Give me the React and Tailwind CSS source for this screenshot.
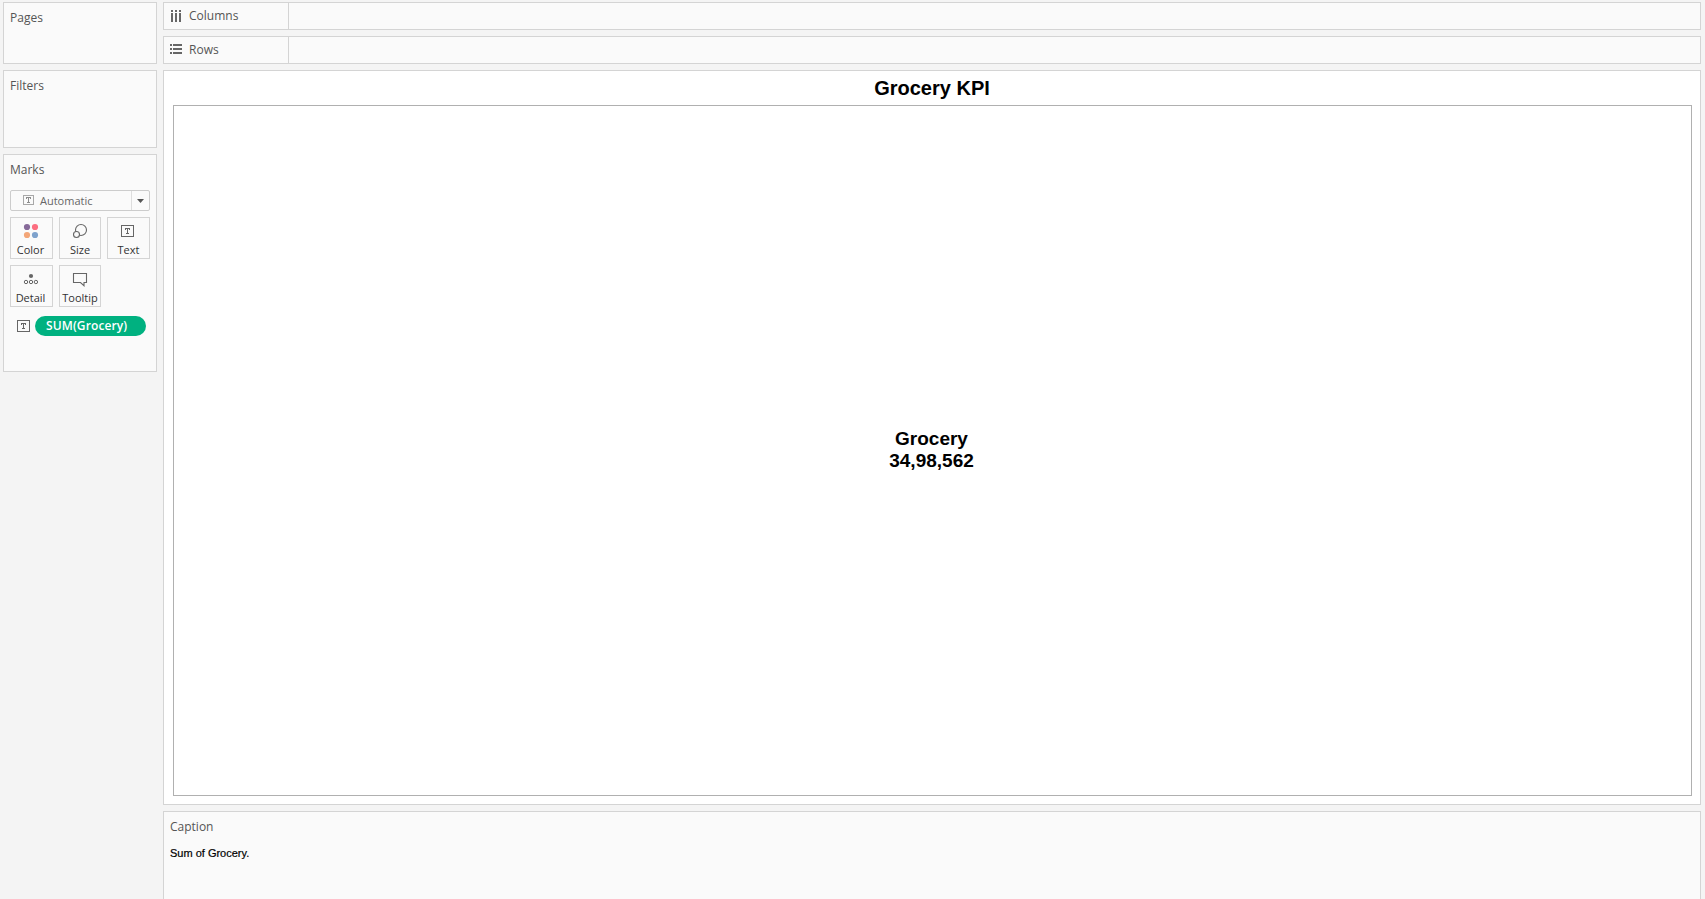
const card = 'border border-[#d4d4d4] bg-[#fafafa]';
const ui = "font-['Open_Sans',sans-serif]";

function TextGlyph({ className = '' }) {
  return (
    <svg className={className} width="13" height="12" viewBox="0 0 13 12" fill="none" shapeRendering="crispEdges">
      <rect x="0.5" y="0.5" width="12" height="11" stroke="#666666" />
      <path d="M4 3h5v2h-1v-1h-1v4h1v1h-3v-1h1v-4h-1v1h-1z" fill="#666666" />
    </svg>
  );
}

function SmallTextGlyph({ className = '' }) {
  return (
    <svg className={className} width="11" height="10" viewBox="0 0 11 10" fill="none">
      <rect x="0.5" y="0.5" width="10" height="9" stroke="#a8a8a8" />
      <path d="M3 2h5v2H7V3H6v4h1v1H4V7h1V3H4v1H3z" fill="#8c8c8c" />
    </svg>
  );
}

function ColumnsIcon() {
  return (
    <svg width="12" height="12" viewBox="0 0 12 12" fill="#666666" shapeRendering="crispEdges">
      <path d="M1 0h2v2H1zM5 0h2v2H5zM9 0h2v2H9zM1 3h2v9H1zM5 3h2v9H5zM9 3h2v9H9z" />
    </svg>
  );
}

function RowsIcon() {
  return (
    <svg width="12" height="12" viewBox="0 0 12 12" fill="#666666" shapeRendering="crispEdges">
      <path d="M0 0h2v2H0zM3 0h9v2H3zM0 4h2v2H0zM3 4h9v2H3zM0 8h2v2H0zM3 8h9v2H3z" />
    </svg>
  );
}

function ColorIcon() {
  return (
    <svg width="16" height="16" viewBox="0 0 16 16">
      <circle cx="4" cy="4" r="3.1" fill="#866a99" />
      <circle cx="12" cy="4" r="3.1" fill="#fc6e80" />
      <circle cx="4" cy="12" r="3.1" fill="#f3a678" />
      <circle cx="12" cy="12" r="3.1" fill="#7ea2cc" />
    </svg>
  );
}

function SizeIcon() {
  return (
    <svg width="16" height="16" viewBox="0 0 16 16" fill="#fafafa" stroke="#666666" strokeWidth="1.1">
      <circle cx="9" cy="7" r="5.5" />
      <circle cx="4.5" cy="11.5" r="3" />
    </svg>
  );
}

function DetailIcon() {
  return (
    <svg width="16" height="16" viewBox="0 0 16 16" fill="none" stroke="#666666">
      <circle cx="8" cy="5" r="2.1" fill="#666666" stroke="none" />
      <circle cx="3" cy="11" r="1.7" />
      <circle cx="8" cy="11" r="1.7" />
      <circle cx="12.900" cy="11" r="1.7" />
    </svg>
  );
}

function TooltipIcon() {
  return (
    <svg width="16" height="16" viewBox="0 0 16 16" fill="none" stroke="#666666" strokeWidth="1.1">
      <path d="M1.500 2.500h13v9h-2.500v3.200l-3.500-3.200h-7z" />
    </svg>
  );
}

function Label({ children, className = '' }) {
  return <div className={`text-[12px] leading-4 text-[#555555] ${className}`}>{children}</div>;
}

function MarkButton({ icon, label, className = '' }) {
  return (
    <button className={`flex h-[42px] flex-col items-center border border-[#d4d4d4] bg-[#fafafa] pt-[5px] ${className}`}>
      <span className="flex h-4 items-center justify-center">{icon}</span>
      <span className="mt-1 text-[11px] leading-[14px] whitespace-nowrap text-[#333333]">{label}</span>
    </button>
  );
}

function Shelf({ icon, label }) {
  return (
    <div className={`flex h-7 ${card}`}>
      <div className="flex w-[125px] items-center border-r border-[#d4d4d4] pl-[6px]">
        {icon}
        <Label className="ml-[7px]">{label}</Label>
      </div>
    </div>
  );
}

export default function App() {
  return (
    <div className={`flex h-[899px] w-[1705px] gap-[6px] overflow-hidden bg-[#f4f4f4] pt-[2px] pl-[3px] ${ui}`}>
      <aside className="flex w-[154px] shrink-0 flex-col gap-[6px]">
        <section className={`h-[62px] px-[6px] pt-[7px] ${card}`}><Label>Pages</Label></section>
        <section className={`h-[78px] px-[6px] pt-[7px] ${card}`}><Label>Filters</Label></section>
        <section className={`h-[218px] px-[6px] pt-[7px] ${card}`}>
          <Label>Marks</Label>
          <div className="mt-[12px] flex h-[21px] w-[140px] items-center rounded-[2px] border border-[#cccccc]">
            <SmallTextGlyph className="mb-px ml-[12px]" />
            <span className="ml-[6px] flex-1 text-[11px] leading-4 text-[#666666]">Automatic</span>
            <span className="flex h-full w-[18px] items-center justify-center border-l border-[#dddddd]">
              <svg width="7" height="4" viewBox="0 0 7 4" fill="#555555"><path d="M0 0h7L3.500 4z" /></svg>
            </span>
          </div>
          <div className="mt-[6px] grid w-[140px] grid-cols-[43px_42px_43px] gap-[6px]">
            <MarkButton icon={<ColorIcon />} label="Color" className="pr-[2px]" />
            <MarkButton icon={<SizeIcon />} label="Size" />
            <MarkButton icon={<TextGlyph className="mr-[2px]" />} label="Text" />
            <MarkButton icon={<DetailIcon />} label="Detail" className="pr-[2px]" />
            <MarkButton icon={<TooltipIcon />} label="Tooltip" />
          </div>
          <div className="mt-[9px] flex items-center pl-[7px]">
            <TextGlyph />
            <div className="ml-[5px] flex h-5 w-[111px] items-center rounded-full bg-[#00b180] pl-[11px] text-[12px] font-semibold tracking-[0.12px] whitespace-nowrap text-white">
              SUM(Grocery)
            </div>
          </div>
        </section>
      </aside>
      <main className="flex w-[1538px] shrink-0 flex-col gap-[6px]">
        <Shelf icon={<ColumnsIcon />} label="Columns" />
        <Shelf icon={<RowsIcon />} label="Rows" />
        <section className="flex h-[735px] shrink-0 flex-col border border-[#d4d4d4] bg-white pr-[8px] pb-[8px] pl-[9px] font-['Liberation_Sans',Arial,sans-serif] font-bold text-black">
          <h1 className="flex h-[34px] items-center justify-center pr-px pb-px text-[20px] leading-6">Grocery KPI</h1>
          <div className="flex flex-1 flex-col items-center justify-center border border-[#b0b0b0] pr-[2px] pb-px text-[19px] leading-[22px]">
            <span>Grocery</span>
            <span>34,98,562</span>
          </div>
        </section>
        <section className={`flex-1 border-b-0 px-[6px] pt-[7px] ${card}`}>
          <Label>Caption</Label>
          <p className="mt-[10px] font-['Liberation_Sans',Arial,sans-serif] text-[11px] leading-4 text-black [-webkit-text-stroke:0.2px_black]">Sum of Grocery.</p>
        </section>
      </main>
    </div>
  );
}
